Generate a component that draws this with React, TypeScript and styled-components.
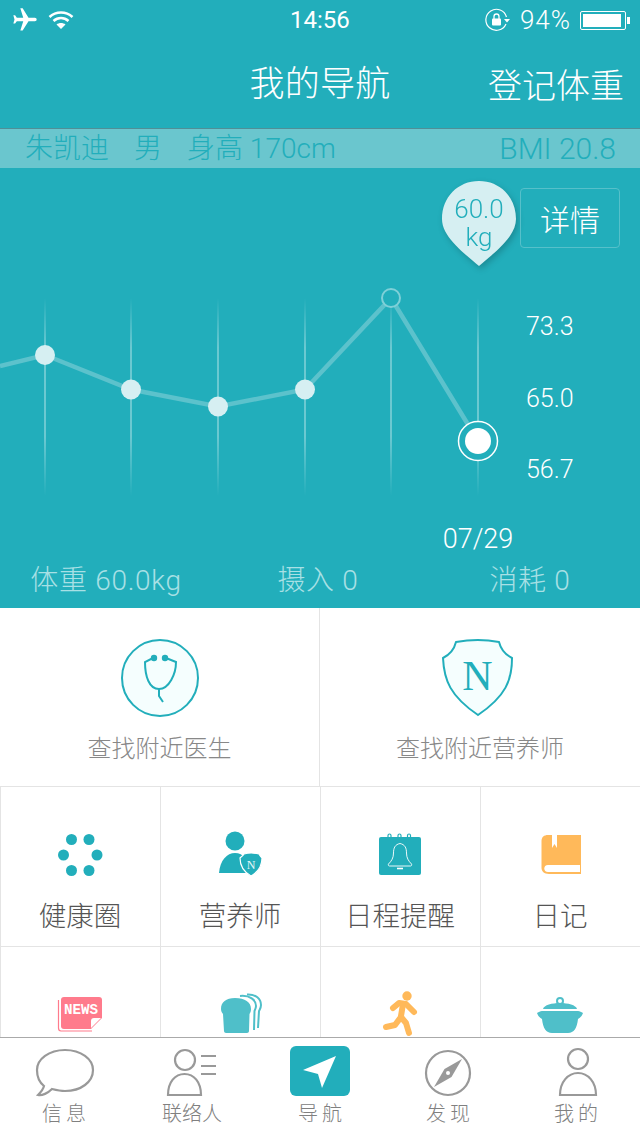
import styled, { createGlobalStyle } from "styled-components";
import { MdFlight } from "react-icons/md";
import type { ReactNode } from "react";

const TEAL = "#22aebb";
const PALE = "#d6eff2";
const ICON_TEAL = "#4fbfc9";
const ORANGE = "#ffb95a";
const PINK = "#ff7b8c";
const GRAY = "#999";

const xs = [45, 131, 218, 305, 391, 478];
const ys = [355, 389.5, 406.5, 389.5, 298, 441];

const DoctorIcon = () => (
    <svg width="80" height="80" viewBox="0 0 80 80">
        <circle cx="40" cy="40" r="38" fill="#f5fefe" stroke={TEAL} strokeWidth="2" />
        <g fill="none" stroke={TEAL} strokeWidth="2">
            <path d="M33 20 L25 24 C25 38 29 51 39 51 C49 51 56 36 56 24 L46 20" />
            <path d="M39 51 V58 L43 64" />
        </g>
        <circle cx="34" cy="20" r="3.2" fill={TEAL} />
        <circle cx="45" cy="20" r="3.2" fill={TEAL} />
    </svg>
);

const ShieldIcon = () => (
    <svg width="80" height="80" viewBox="2 0 80 80">
        <path
            d="M18 4 Q40 0 61 4 C63 12 68 17 74 20 C74 42 68 58 40 77 C12 58 6 42 5 20 C11 17 16 12 18 4Z"
            fill="#f5fefe"
            stroke={TEAL}
            strokeWidth="2"
        />
        <text x="39.5" y="52" textAnchor="middle" fontFamily="'Liberation Serif', serif" fontSize="42" fill={TEAL}>
            N
        </text>
    </svg>
);

const CircleDots = () => (
    <svg width="64" height="64" viewBox="0 0 64 64" fill={TEAL}>
        <circle cx="23.5" cy="16.5" r="5.5" />
        <circle cx="41" cy="16.5" r="5.5" />
        <circle cx="15.5" cy="32" r="5.5" />
        <circle cx="49" cy="32" r="5.5" />
        <circle cx="23.5" cy="47.5" r="5.5" />
        <circle cx="41" cy="47.5" r="5.5" />
    </svg>
);

const DietitianIcon = () => (
    <svg width="64" height="64" viewBox="0 0 64 64">
        <circle cx="27" cy="18" r="9.5" fill={TEAL} />
        <path d="M11 50 C12 37 19 30 27 30 C35 30 42 37 43 50Z" fill={TEAL} />
        <path
            d="M36 31 Q43 29 51 31 C52 33 53 34 54 35 C54 44 50 49 43 53 C36 49 32 44 32 35 C33 34 35 33 36 31Z"
            fill={TEAL}
            stroke="#fff"
            strokeWidth="1.2"
        />
        <text x="43" y="45.5" textAnchor="middle" fontFamily="'Liberation Serif', serif" fontSize="12" fill="#e6f7f8">
            N
        </text>
    </svg>
);

const CalendarIcon = () => (
    <svg width="64" height="64" viewBox="0 0 64 64">
        <g fill="none" stroke={TEAL} strokeWidth="1.2">
            <path d="M20 15 V12.5 A1.5 1.5 0 0 1 23 12.5 V15" />
            <path d="M30 15 V12.5 A1.5 1.5 0 0 1 33 12.5 V15" />
            <path d="M39.5 15 V12.5 A1.5 1.5 0 0 1 42.5 12.5 V15" />
        </g>
        <rect x="11" y="14" width="42" height="38" rx="2" fill={TEAL} />
        <path
            d="M32 20.5 C27 21.5 25.5 25 25.5 30 C25.5 35 23.5 38 20.5 41 C20 42 20.5 43 21.5 43 H42.5 C43.5 43 44 42 43.5 41 C40.5 38 38.5 35 38.5 30 C38.5 25 37 21.5 32 20.5Z"
            fill="none"
            stroke="#fff"
            strokeWidth="0.9"
        />
        <path d="M29 45.5 H35" stroke="#fff" strokeWidth="1.6" />
    </svg>
);

const BookIcon = () => (
    <svg width="64" height="64" viewBox="0 0 64 64">
        <path d="M20 12 H53 V51 H21 C16 51 13.5 48 13.5 45 V18 C13.5 14 16 12 20 12Z" fill={ORANGE} />
        <path d="M24 12 V25 L26.5 21 L29 25 V12Z" fill="#fff" />
        <path d="M52 42 H20 C15 42 15 49 20 49 H52Z" fill="#fff" />
    </svg>
);

const NewsIcon = () => (
    <svg width="64" height="64" viewBox="0 0 64 64">
        <path d="M10.5 17 V45 C10.5 47 11.5 48 13 48 H44" fill="none" stroke={PINK} strokeWidth="1.2" />
        <path d="M16 14 H51 C53 14 54 15 54 17 V35 L43 46 H16 C14 46 13 45 13 43 V17 C13 15 14 14 16 14Z" fill={PINK} />
        <path d="M53 35 H46 C44 35 43 36 43 38 V45Z" fill="#fff" />
        <text
            x="16"
            y="31"
            fontFamily="'Liberation Mono', monospace"
            fontWeight="700"
            fontSize="15"
            textLength="34"
            lengthAdjust="spacingAndGlyphs"
            fill="#fff"
        >
            NEWS
        </text>
    </svg>
);

const BreadIcon = () => (
    <svg width="64" height="64" viewBox="0 0 64 64">
        <g fill="none" stroke={ICON_TEAL} strokeWidth="2">
            <path d="M32 13 C42 12 48 17 48 23 C48 25 47 27 46.5 28 L46 47" />
            <path d="M39 11.5 C48 11 53 16 53 22 C53 25 51.5 27 51 28 L50 45" />
        </g>
        <path
            d="M27 15 C37 15 43 19 43 26 C43 29 42 30 41.5 31 L41 48 C41 49 40 50 39 50 H18 C17 50 16 49 16 48 L15 31 C14 30 13 28 13 26 C13 19 18 15 27 15Z"
            fill={ICON_TEAL}
        />
    </svg>
);

const RunnerIcon = () => (
    <svg width="64" height="64" viewBox="0 0 64 64">
        <circle cx="39" cy="13" r="4.7" fill={ORANGE} />
        <g fill="none" stroke={ORANGE} strokeWidth="6" strokeLinecap="round" strokeLinejoin="round">
            <path d="M25 25 L31 20 L38 21 L46 29" />
            <path d="M35 21 L33 33" />
            <path d="M18 44 L27 42 L33 34 L38 40 L41 50" />
        </g>
    </svg>
);

const PotIcon = () => (
    <svg width="64" height="64" viewBox="0 0 64 64">
        <circle cx="32" cy="18" r="3" fill="none" stroke={ICON_TEAL} strokeWidth="2" />
        <path d="M15 26 C16 22 24 20 32 20 C40 20 48 22 49 26Z" fill={ICON_TEAL} />
        <path
            d="M9 30 C11 29 12 28 14 28 H50 C52 28 53 29 55 30 C54 33 52 35 50 36 C49 45 46 50 40 50 H24 C18 50 15 45 14 36 C12 35 10 33 9 30Z"
            fill={ICON_TEAL}
        />
    </svg>
);

const MessageIcon = () => (
    <svg width="64" height="52" viewBox="0 0 64 52" fill="none" stroke={GRAY} strokeWidth="2.2">
        <path d="M33 4 C49 4 61 13 61 24 C61 36 49 45 33 45 C28 45 24 44 20 43 C16 47 10 50 6 49 C8 47 11 44 12 40 C7 36 5 30 5 24 C5 13 17 4 33 4Z" />
    </svg>
);

const ContactsIcon = () => (
    <svg width="64" height="52" viewBox="0 0 64 52" fill="none" stroke={GRAY} strokeWidth="2.2">
        <circle cx="25" cy="14" r="10" />
        <path d="M8 49 C8 36 15 28 24.5 28 C34 28 41 36 41 49Z" />
        <path d="M41 10 H56 M41 20 H56 M41 28 H56" />
    </svg>
);

const NavIcon = () => (
    <svg width="64" height="52" viewBox="0 0 64 52">
        <rect x="2" y="0" width="60" height="50" rx="6" fill={TEAL} />
        <path d="M48 10 L15 24 L30 28 L34 42Z" fill="#fff" />
    </svg>
);

const CompassIcon = () => (
    <svg width="64" height="52" viewBox="0 0 64 52">
        <circle cx="32" cy="27" r="22" fill="none" stroke={GRAY} strokeWidth="2.2" />
        <path d="M46 13 L35.5 31 L18 41 L28.5 23Z" fill={GRAY} />
        <circle cx="32" cy="27" r="2" fill="#fff" />
    </svg>
);

const PersonIcon = () => (
    <svg width="64" height="52" viewBox="0 0 64 52" fill="none" stroke={GRAY} strokeWidth="2.2">
        <circle cx="34" cy="13" r="10" />
        <path d="M16 49 C16 36 24 27 34 27 C44 27 52 36 52 49Z" />
    </svg>
);

const WifiIcon = () => (
    <svg width="26" height="20" viewBox="0 0 26 20" fill="none" stroke="#fff" strokeWidth="2.6">
        <path d="M1.5 7 C8 1 18 1 24.5 7" />
        <path d="M5.5 11 C10 7 16 7 20.5 11" />
        <path d="M13 19 L8.5 14.5 C11 12.5 15 12.5 17.5 14.5Z" fill="#fff" stroke="none" />
    </svg>
);

const RotationLockIcon = () => (
    <svg width="26" height="24" viewBox="0 0 26 24">
        <path d="M21 16 A10.5 10.5 0 1 1 21.5 9" fill="none" stroke="#fff" strokeWidth="1.2" />
        <path d="M19 11 H25 L22 14.5Z" fill="#fff" />
        <rect x="7" y="10.5" width="9" height="7" rx="1" fill="#fff" />
        <path d="M9 11 V8.5 A2.5 2.5 0 0 1 14 8.5 V11" fill="none" stroke="#fff" strokeWidth="1.3" />
    </svg>
);

const WeightChart = () => (
    <ChartSvg viewBox="0 168 640 392">
        <defs>
            <linearGradient id="gridFade" gradientUnits="userSpaceOnUse" x1="0" y1="298" x2="0" y2="496">
                <stop offset="0" stopColor="#fff" stopOpacity="0" />
                <stop offset="0.25" stopColor="#fff" stopOpacity="0.33" />
                <stop offset="0.7" stopColor="#fff" stopOpacity="0.33" />
                <stop offset="1" stopColor="#fff" stopOpacity="0" />
            </linearGradient>
        </defs>
        {xs.map((x) => (
            <rect key={x} x={x - 1} y="298" width="2" height="198" fill="url(#gridFade)" />
        ))}
        <polyline
            points={"0,366 " + xs.map((x, i) => x + "," + ys[i]).join(" ")}
            fill="none"
            stroke="#5cc2cc"
            strokeWidth="4.5"
        />
        {xs.slice(0, 4).map((x, i) => (
            <circle key={x} cx={x} cy={ys[i]} r="10" fill={PALE} />
        ))}
        <circle cx="391" cy="298" r="9" fill={TEAL} stroke="#7fd0d8" strokeWidth="2" />
        <circle cx="478" cy="441" r="19.5" fill={TEAL} stroke="#fff" strokeWidth="1.5" />
        <circle cx="478" cy="441" r="13" fill="#fff" />
        <AxisText x="526" y="335">73.3</AxisText>
        <AxisText x="526" y="407">65.0</AxisText>
        <AxisText x="526" y="478">56.7</AxisText>
        <DateText x="478" y="548" textAnchor="middle">07/29</DateText>
    </ChartSvg>
);

const shortcuts: { icon: ReactNode; label: string }[] = [
    { icon: <DoctorIcon />, label: "查找附近医生" },
    { icon: <ShieldIcon />, label: "查找附近营养师" },
];

const menu: { icon: ReactNode; label?: string }[] = [
    { icon: <CircleDots />, label: "健康圈" },
    { icon: <DietitianIcon />, label: "营养师" },
    { icon: <CalendarIcon />, label: "日程提醒" },
    { icon: <BookIcon />, label: "日记" },
    { icon: <NewsIcon /> },
    { icon: <BreadIcon /> },
    { icon: <RunnerIcon /> },
    { icon: <PotIcon /> },
];

const tabs = [
    { icon: <MessageIcon />, label: "信息", spaced: true },
    { icon: <ContactsIcon />, label: "联络人", spaced: false },
    { icon: <NavIcon />, label: "导航", spaced: true },
    { icon: <CompassIcon />, label: "发现", spaced: true },
    { icon: <PersonIcon />, label: "我的", spaced: true },
];

const App = () => {
    return (
        <Page>
            <GlobalStyle />
            <Content>
                <Hero>
                    <StatusBar>
                        <StatusGroup>
                            <PlaneIcon />
                            <WifiIcon />
                        </StatusGroup>
                        <Clock>14:56</Clock>
                        <StatusGroup>
                            <RotationLockIcon />
                            <Percent>94%</Percent>
                            <Battery>
                                <BatteryFill />
                            </Battery>
                        </StatusGroup>
                    </StatusBar>
                    <NavBar>
                        <Title>我的导航</Title>
                        <NavAction>登记体重</NavAction>
                    </NavBar>
                    <InfoBand>
                        <InfoGroup>
                            <span>朱凯迪</span>
                            <span>男</span>
                            <span>身高 170cm</span>
                        </InfoGroup>
                        <span>BMI 20.8</span>
                    </InfoBand>
                    <ChartCanvas>
                        <WeightChart />
                        <Bubble>
                            <BubbleShape viewBox="0 0 74 85">
                                <path
                                    d="M37 0 C58 0 74 16 74 38 C74 56 52 72 37 85 C22 72 0 56 0 38 C0 16 16 0 37 0Z"
                                    fill={PALE}
                                />
                            </BubbleShape>
                            <BubbleText>60.0</BubbleText>
                            <BubbleText>kg</BubbleText>
                        </Bubble>
                        <DetailButton>详情</DetailButton>
                    </ChartCanvas>
                    <Stats>
                        <span>体重 60.0kg</span>
                        <span>摄入 0</span>
                        <span>消耗 0</span>
                    </Stats>
                </Hero>
                <Shortcuts>
                    {shortcuts.map((item) => (
                        <Shortcut key={item.label}>
                            {item.icon}
                            <ShortcutLabel>{item.label}</ShortcutLabel>
                        </Shortcut>
                    ))}
                </Shortcuts>
                <Menu>
                    {menu.map((item, i) => (
                        <MenuCell key={i}>
                            {item.icon}
                            {item.label && <MenuLabel>{item.label}</MenuLabel>}
                        </MenuCell>
                    ))}
                </Menu>
            </Content>
            <TabBar>
                {tabs.map((tab) => (
                    <Tab key={tab.label}>
                        {tab.icon}
                        <TabLabel $spaced={tab.spaced}>{tab.label}</TabLabel>
                    </Tab>
                ))}
            </TabBar>
        </Page>
    );
};

export default App;

const GlobalStyle = createGlobalStyle`
    html, body {
        margin: 0;
        width: 640px;
        height: 1136px;
        overflow: hidden;
        background: #fff;
    }
    * {
        box-sizing: border-box;
    }
    svg {
        display: block;
    }
`;

const Page = styled.div`
    display: flex;
    flex-direction: column;
    width: 640px;
    height: 1136px;
    overflow: hidden;
    font-family: Roboto, "Noto Sans CJK SC", sans-serif;
    font-weight: 300;
`;

const Content = styled.div`
    flex: 1;
    min-height: 0;
    overflow: hidden;
`;

const Hero = styled.section`
    background: ${TEAL};
    color: #fff;
`;

const StatusBar = styled.div`
    display: flex;
    align-items: center;
    justify-content: space-between;
    height: 40px;
    padding: 0 10px 0 11px;
    position: relative;
`;

const StatusGroup = styled.div`
    display: flex;
    align-items: center;
    gap: 9px;
`;

const PlaneIcon = styled(MdFlight)`
    width: 28px;
    height: 28px;
    color: #fff;
    transform: rotate(90deg);
`;

const Clock = styled.span`
    position: absolute;
    left: 290px;
    top: 5px;
    font-size: 24px;
    line-height: 30px;
    font-weight: 400;
`;

const Percent = styled.span`
    font-size: 26px;
    line-height: 30px;
    letter-spacing: 1px;
`;

const Battery = styled.div`
    position: relative;
    width: 46px;
    height: 19px;
    padding: 2px;
    border: 1px solid #fff;
    border-radius: 2px;
    margin-right: 4px;
    &::after {
        content: "";
        position: absolute;
        right: -5px;
        top: 5px;
        width: 3px;
        height: 7px;
        background: #fff;
    }
`;

const BatteryFill = styled.div`
    width: 94%;
    height: 100%;
    background: #fff;
`;

const NavBar = styled.div`
    position: relative;
    display: flex;
    align-items: center;
    justify-content: center;
    height: 88px;
`;

const Title = styled.h1`
    margin: 0;
    padding-top: 2px;
    font-size: 35px;
    font-weight: 300;
    line-height: 88px;
    letter-spacing: 0.3px;
`;

const NavAction = styled.span`
    position: absolute;
    right: 16px;
    top: 2px;
    font-size: 34px;
    line-height: 88px;
`;

const InfoBand = styled.div`
    display: flex;
    align-items: center;
    justify-content: space-between;
    height: 40px;
    padding: 0 24px 0 25px;
    background: #6ac6ce;
    border-top: 1px solid #4f8f97;
    color: ${TEAL};
    font-size: 30px;
    line-height: 40px;
`;

const InfoGroup = styled.div`
    display: flex;
    gap: 25px;
    font-size: 28px;
`;

const ChartCanvas = styled.div`
    position: relative;
    height: 392px;
`;

const ChartSvg = styled.svg`
    width: 640px;
    height: 392px;
`;

const AxisText = styled.text`
    fill: #fff;
    font-size: 25px;
`;

const DateText = styled.text`
    fill: #fff;
    font-size: 27px;
`;

const Bubble = styled.div`
    position: absolute;
    left: 442px;
    top: 13px;
    width: 74px;
    height: 85px;
    padding-top: 14px;
    color: ${TEAL};
    text-align: center;
    filter: drop-shadow(2px 3px 3px rgba(0, 0, 0, 0.2));
`;

const BubbleShape = styled.svg`
    position: absolute;
    left: 0;
    top: 0;
    width: 74px;
    height: 85px;
`;

const BubbleText = styled.div`
    position: relative;
    font-size: 26px;
    line-height: 28px;
`;

const DetailButton = styled.div`
    position: absolute;
    right: 20px;
    top: 20px;
    display: flex;
    align-items: center;
    justify-content: center;
    width: 100px;
    height: 60px;
    border: 1px solid #56c0ca;
    border-radius: 4px;
    font-size: 30px;
`;

const Stats = styled.div`
    display: grid;
    grid-template-columns: repeat(3, 1fr);
    height: 48px;
    padding-top: 1px;
    padding-right: 4px;
    color: #a8e0e5;
    font-size: 28px;
    line-height: 40px;
    letter-spacing: 0.7px;
    text-align: center;
`;

const Shortcuts = styled.section`
    display: grid;
    grid-template-columns: 320px 320px;
    height: 179px;
    border-bottom: 1px solid #e4e4e4;
`;

const Shortcut = styled.div`
    display: flex;
    flex-direction: column;
    align-items: center;
    padding-top: 30px;
    &:first-child {
        border-right: 1px solid #e4e4e4;
    }
`;

const ShortcutLabel = styled.span`
    margin-top: 13px;
    color: #888;
    font-size: 24px;
    line-height: 36px;
`;

const Menu = styled.section`
    display: grid;
    grid-template-columns: repeat(4, 160px);
    grid-auto-rows: 160px;
`;

const MenuCell = styled.div`
    display: flex;
    flex-direction: column;
    align-items: center;
    padding: 36px 1px 0 0;
    border-left: 1px solid #e4e4e4;
    border-bottom: 1px solid #e4e4e4;
`;

const MenuLabel = styled.span`
    margin-top: 10px;
    color: #555;
    font-size: 27.5px;
    line-height: 40px;
`;

const TabBar = styled.nav`
    display: grid;
    flex: none;
    grid-template-columns: repeat(5, 128px);
    height: 99px;
    background: #fff;
    border-top: 1px solid #aaa;
`;

const Tab = styled.div`
    display: flex;
    flex-direction: column;
    align-items: center;
    padding-top: 8px;
`;

const TabLabel = styled.span<{ $spaced: boolean }>`
    margin-top: 4px;
    margin-right: ${(p) => (p.$spaced ? "-4px" : "0")};
    color: #808080;
    font-size: 20px;
    line-height: 24px;
    letter-spacing: ${(p) => (p.$spaced ? "4px" : "0")};
`;
